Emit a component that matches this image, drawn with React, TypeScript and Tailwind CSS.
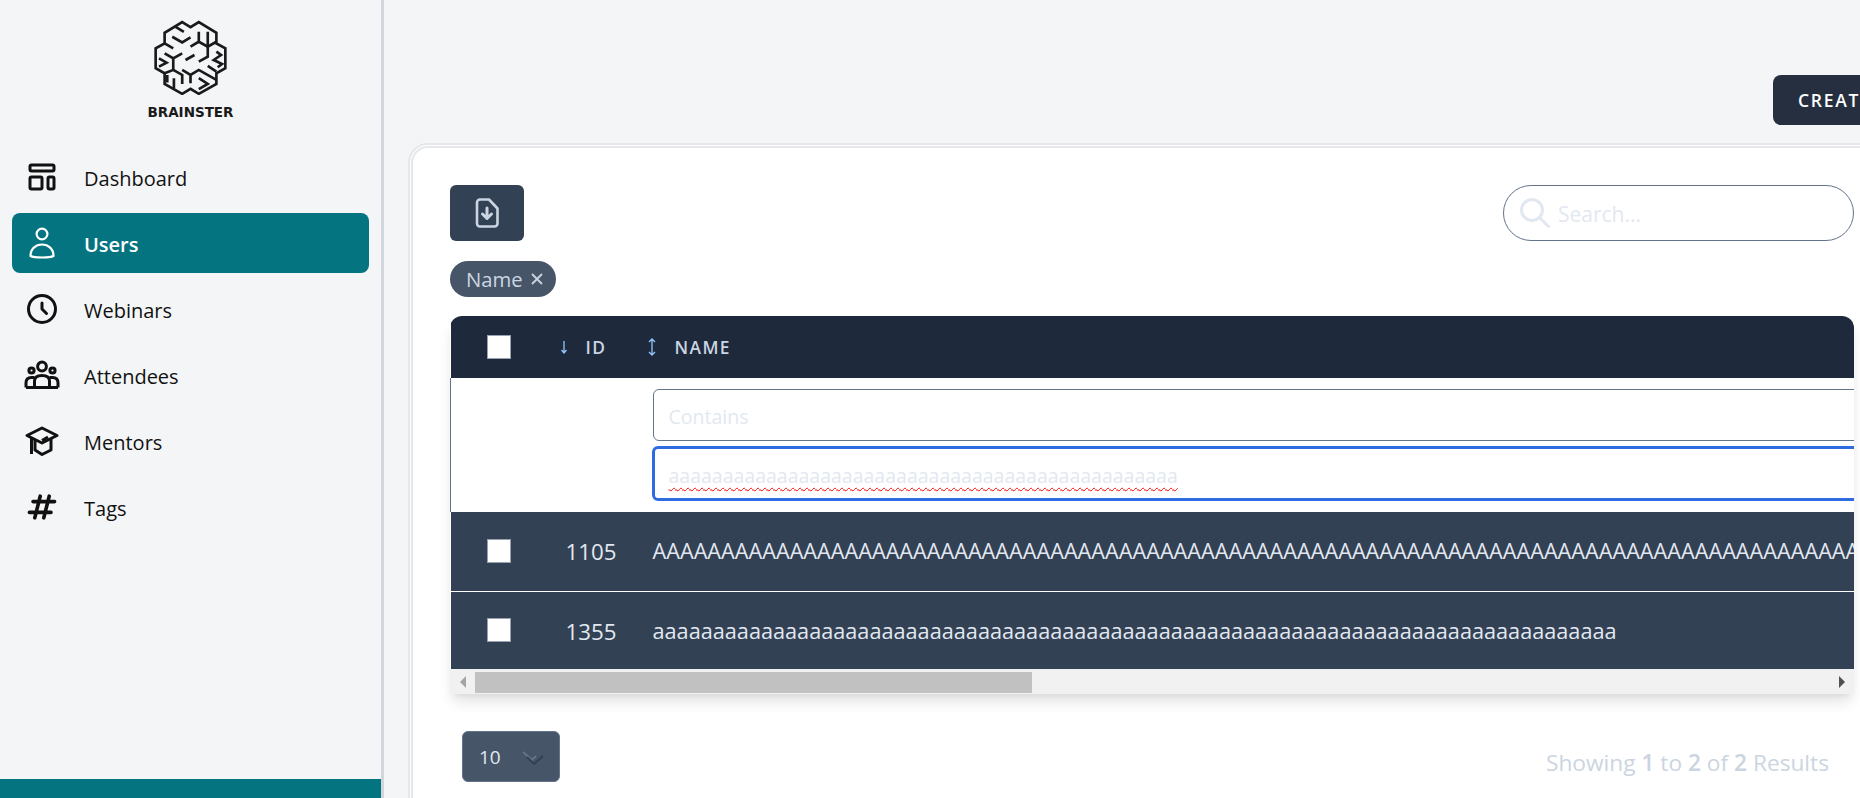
import { HiHashtag, HiOutlineClock, HiOutlineSearch, HiOutlineTemplate } from "react-icons/hi";

function UserIcon({ className }: { className?: string }) {
    return (
        <svg viewBox="0 0 36 36" className={className} fill="none" stroke="currentColor" strokeWidth="2.2">
            <circle cx="18" cy="9" r="5.4" />
            <path d="M6.5 31C6.5 24 11.5 19.5 18 19.5S29.5 24 29.5 31C26 33 10 33 6.5 31Z" strokeLinejoin="round" />
        </svg>
    );
}

function GroupIcon({ className }: { className?: string }) {
    return (
        <svg viewBox="0 0 36 36" className={className} fill="none" stroke="currentColor" strokeWidth="3" strokeLinejoin="round">
            <circle cx="18" cy="9.5" r="4.4" />
            <circle cx="7.5" cy="13.5" r="2.6" />
            <circle cx="28.5" cy="13.5" r="2.6" />
            <path d="M2 30.5V26C2 22.5 4 20.5 7.5 20.5H10.5M34 30.5V26C34 22.5 32 20.5 28.5 20.5H25.5" />
            <path d="M10.5 30.5V24C10.5 20 14 18.5 18 18.5S25.5 20 25.5 24V30.5" />
            <path d="M2 30.5H34" />
        </svg>
    );
}

function CapIcon({ className }: { className?: string }) {
    return (
        <svg viewBox="0 0 36 36" className={className} fill="none" stroke="currentColor" strokeWidth="3" strokeLinejoin="round">
            <path d="M18 5 33 12.5 18 20 3 12.5Z" />
            <path d="M11 17V27L18 31.5 27 27V16" />
            <path d="M18 17.5 24 14" />
            <path d="M7.5 15V31" />
        </svg>
    );
}

const navItems = [
    { label: "Dashboard", icon: HiOutlineTemplate },
    { label: "Users", icon: UserIcon, active: true },
    { label: "Webinars", icon: HiOutlineClock },
    { label: "Attendees", icon: GroupIcon },
    { label: "Mentors", icon: CapIcon },
    { label: "Tags", icon: HiHashtag },
];

function BrainLogo() {
    return (
        <svg viewBox="70 30 220 225" className="w-[73px] h-[75px]" fill="none" stroke="#1a1a1a" strokeWidth="8" strokeLinejoin="miter">
            <path d="M155 36 180 51 205 36 258 68V100L285 115V175L258 190V222L205 252 180 237 155 252 102 222V190L75 175V115L102 100V68Z" />
            <path d="M135 50 160 65M125 80 155 97 180 82" />
            <path d="M205 65V95L180 110M205 95 232 110 258 95M232 65V110" />
            <path d="M102 100 128 115M102 130 128 145V180L102 190M128 145 155 130M85 145 108 158 85 170" />
            <path d="M165 150 192 135" />
            <path d="M205 155 232 140V110M258 125 272 135 250 150 275 162 262 172M232 168 258 185" />
            <path d="M128 180 155 195V222M110 195V218M130 205V235M155 180 180 195 205 180 258 210M180 195V220M205 205 232 222 205 238" />
        </svg>
    );
}

function SortDown() {
    return (
        <svg viewBox="0 0 10 18" className="w-[10px] h-[18px]" fill="none" stroke="#93c5fd" strokeWidth="1.3">
            <path d="M5 3V15M2.5 12 5 15 7.5 12" />
        </svg>
    );
}

function SortBoth() {
    return (
        <svg viewBox="0 0 12 20" className="w-[12px] h-[20px]" fill="none" stroke="#93c5fd" strokeWidth="1.3">
            <path d="M6 2V18M3 5 6 2 9 5M3 15 6 18 9 15" />
        </svg>
    );
}

function Checkbox() {
    return <div className="w-[24px] h-[24px] bg-white border border-gray-400 mx-auto" />;
}

export default function App() {
    return (
        <div className="flex h-screen w-full overflow-hidden bg-[#f4f5f7] font-['Open_Sans',sans-serif] text-[20px]">
            <aside className="w-[384px] shrink-0 h-full flex flex-col border-r-[3px] border-[#d2d6dc]">
                <div className="flex flex-col items-center pt-[20px]">
                    <BrainLogo />
                    <div className="mt-[8px] font-['DejaVu_Sans',sans-serif] font-bold text-[13.5px] leading-[18px] text-[#1a1a1a]">BRAINSTER</div>
                </div>
                <nav className="mt-[26px] px-[12px] flex flex-col gap-[6px]">
                    {navItems.map((item) => {
                        const Icon = item.icon;
                        return (
                            <div
                                key={item.label}
                                className={item.active
                                    ? "h-[60px] flex items-center gap-[24px] pl-[12px] rounded-lg bg-[#047481] text-white font-semibold"
                                    : "h-[60px] flex items-center gap-[24px] pl-[12px] rounded-lg text-[#111111]"}
                            >
                                <Icon className="w-[36px] h-[36px] shrink-0" />
                                <span className="pt-[4px]">{item.label}</span>
                            </div>
                        );
                    })}
                </nav>
                <div className="mt-auto h-[19px] bg-[#047481]" />
            </aside>

            <main className="flex-1 min-w-0 overflow-hidden pl-[24px] pt-[75px]">
                <div className="w-[1488px]">
                    <div className="flex pl-[1365px]">
                        <button className="h-[50px] shrink-0 pl-[25px] pr-[26px] rounded-lg bg-[#252f3f] text-white font-semibold text-[17.5px] tracking-[0.1em] whitespace-nowrap">
                            CREATE USER
                        </button>
                    </div>

                    <div className="mt-[18px] bg-white border-[5px] border-double border-[#e5e7eb] rounded-[20px] pt-[37px] pl-[37px] pr-[37px] pb-[40px]">
                        <div className="flex items-center justify-between">
                            <button className="w-[74px] h-[56px] rounded-md bg-[#334155] flex items-center justify-center">
                                <svg viewBox="0 0 24 30" className="w-[24px] h-[30px]" fill="none" stroke="#cbd5e1" strokeWidth="2.6" strokeLinejoin="round" strokeLinecap="round">
                                    <path d="M5 1.5H14L22.5 10.5V25.5A3 3 0 0 1 19.5 28.5H5A3 3 0 0 1 2 25.5V4.5A3 3 0 0 1 5 1.5Z" />
                                    <path d="M12 10V20M7.5 16 12 20.5 16.5 16" strokeWidth="3" />
                                </svg>
                            </button>
                            <div className="w-[351px] h-[56px] rounded-full border border-[#64748b] flex items-center pl-[13px] text-[#e2e8f0]">
                                <HiOutlineSearch className="w-[36px] h-[36px] shrink-0" />
                                <input placeholder="Search..." className="ml-[5px] mt-[4px] w-[280px] outline-none text-[21px] placeholder:text-[#e2e8f0]" />
                            </div>
                        </div>

                        <div className="mt-[20px] h-[36px] w-[106px] rounded-full bg-[#475569] flex items-center pl-[16px] text-[#cbd5e1] text-[20.3px]">
                            Name
                            <svg viewBox="0 0 12 12" className="ml-[8px] w-[12px] h-[12px]" fill="none" stroke="#cbd5e1" strokeWidth="1.8">
                                <path d="M1 1 11 11M11 1 1 11" />
                            </svg>
                        </div>

                        <div className="mt-[19px] -mx-[18px] px-[18px] pb-[19px] overflow-hidden">
                            <div className="shadow-[0_10px_15px_-3px_rgba(0,0,0,0.12),0_4px_6px_-2px_rgba(0,0,0,0.05)] rounded-t-xl">
                                <div className="overflow-hidden rounded-t-xl">
                                    <table className="table-fixed w-[2500px] border-collapse">
                                        <colgroup>
                                            <col className="w-[97px]" />
                                            <col className="w-[90px]" />
                                            <col />
                                        </colgroup>
                                        <thead>
                                            <tr className="h-[62px] bg-[#1e293b] text-[#cbd5e1] font-semibold text-[17.4px] tracking-[0.08em]">
                                                <th><Checkbox /></th>
                                                <th className="font-semibold text-left">
                                                    <div className="flex items-center pl-[11px] gap-[17px]"><SortDown /><span>ID</span></div>
                                                </th>
                                                <th className="font-semibold text-left">
                                                    <div className="flex items-center pl-[8px] gap-[17px]"><SortBoth /><span>NAME</span></div>
                                                </th>
                                            </tr>
                                            <tr className="h-[134px] bg-white">
                                                <th className="border-l border-[#64748b]" />
                                                <th />
                                                <th className="font-normal text-left pl-[15px] pr-[16px]">
                                                    <input placeholder="Contains" className="block w-full h-[52px] pt-[2px] rounded-md border border-[#64748b] px-[15px] outline-none text-[19.5px] placeholder:text-[#e2e8f0]" />
                                                    <div className="mt-[5px] -mx-[1px] h-[55px] pt-[4px] rounded-md border-[3px] border-[#2f6be0] px-[14px] flex items-center text-[19.5px] text-[#e2e8f0]">
                                                        <span className="underline decoration-wavy decoration-[#ff0000] decoration-1 underline-offset-[4px]">{"a".repeat(47)}</span>
                                                    </div>
                                                </th>
                                            </tr>
                                        </thead>
                                        <tbody className="bg-[#334155] text-[#e2e8f0] text-[21.7px]">
                                            <tr className="h-[79px] border-b border-white">
                                                <td><Checkbox /></td>
                                                <td className="pl-[18px] text-[22.3px]">1105</td>
                                                <td className="pl-[15px] whitespace-nowrap overflow-hidden">{"A".repeat(150)}</td>
                                            </tr>
                                            <tr className="h-[78px]">
                                                <td><Checkbox /></td>
                                                <td className="pl-[18px] pt-[3px] text-[22.3px]">1355</td>
                                                <td className="pl-[15px] pt-[3px] whitespace-nowrap">{"a".repeat(80)}</td>
                                            </tr>
                                        </tbody>
                                    </table>
                                </div>
                                <div className="h-[25px] bg-[#f1f1f1] flex items-center pt-[1px]">
                                    <div className="w-[25px] flex justify-center">
                                        <div className="w-0 h-0 border-y-[6px] border-y-transparent border-r-[6px] border-r-[#a3a3a3]" />
                                    </div>
                                    <div className="w-[557px] h-[21px] bg-[#c1c1c1]" />
                                    <div className="flex-1 flex justify-end pr-[9px]">
                                        <div className="w-0 h-0 border-y-[6px] border-y-transparent border-l-[6px] border-l-[#505050]" />
                                    </div>
                                </div>
                            </div>
                        </div>

                        <div className="mt-[18px] flex items-center justify-between pl-[12px] pr-[25px]">
                            <div className="w-[98px] h-[51px] pt-[2px] rounded-md bg-[#475569] border border-[#64748b] flex items-center pl-[16px] text-[#e2e8f0] text-[19px]">
                                10
                                <svg viewBox="0 0 22 16" className="ml-[21px] w-[22px] h-[16px]" fill="none" strokeWidth="2">
                                    <path d="M1 2 10 10 14 6" stroke="#64748b" />
                                    <path d="M5 7 12 14 21 6" stroke="#334155" />
                                </svg>
                            </div>
                            <div className="pt-[14px] text-[#cbd5e1] text-[22.7px]">
                                Showing <span className="font-semibold">1</span> to <span className="font-semibold">2</span> of <span className="font-semibold">2</span> Results
                            </div>
                        </div>
                    </div>
                </div>
            </main>
        </div>
    );
}
